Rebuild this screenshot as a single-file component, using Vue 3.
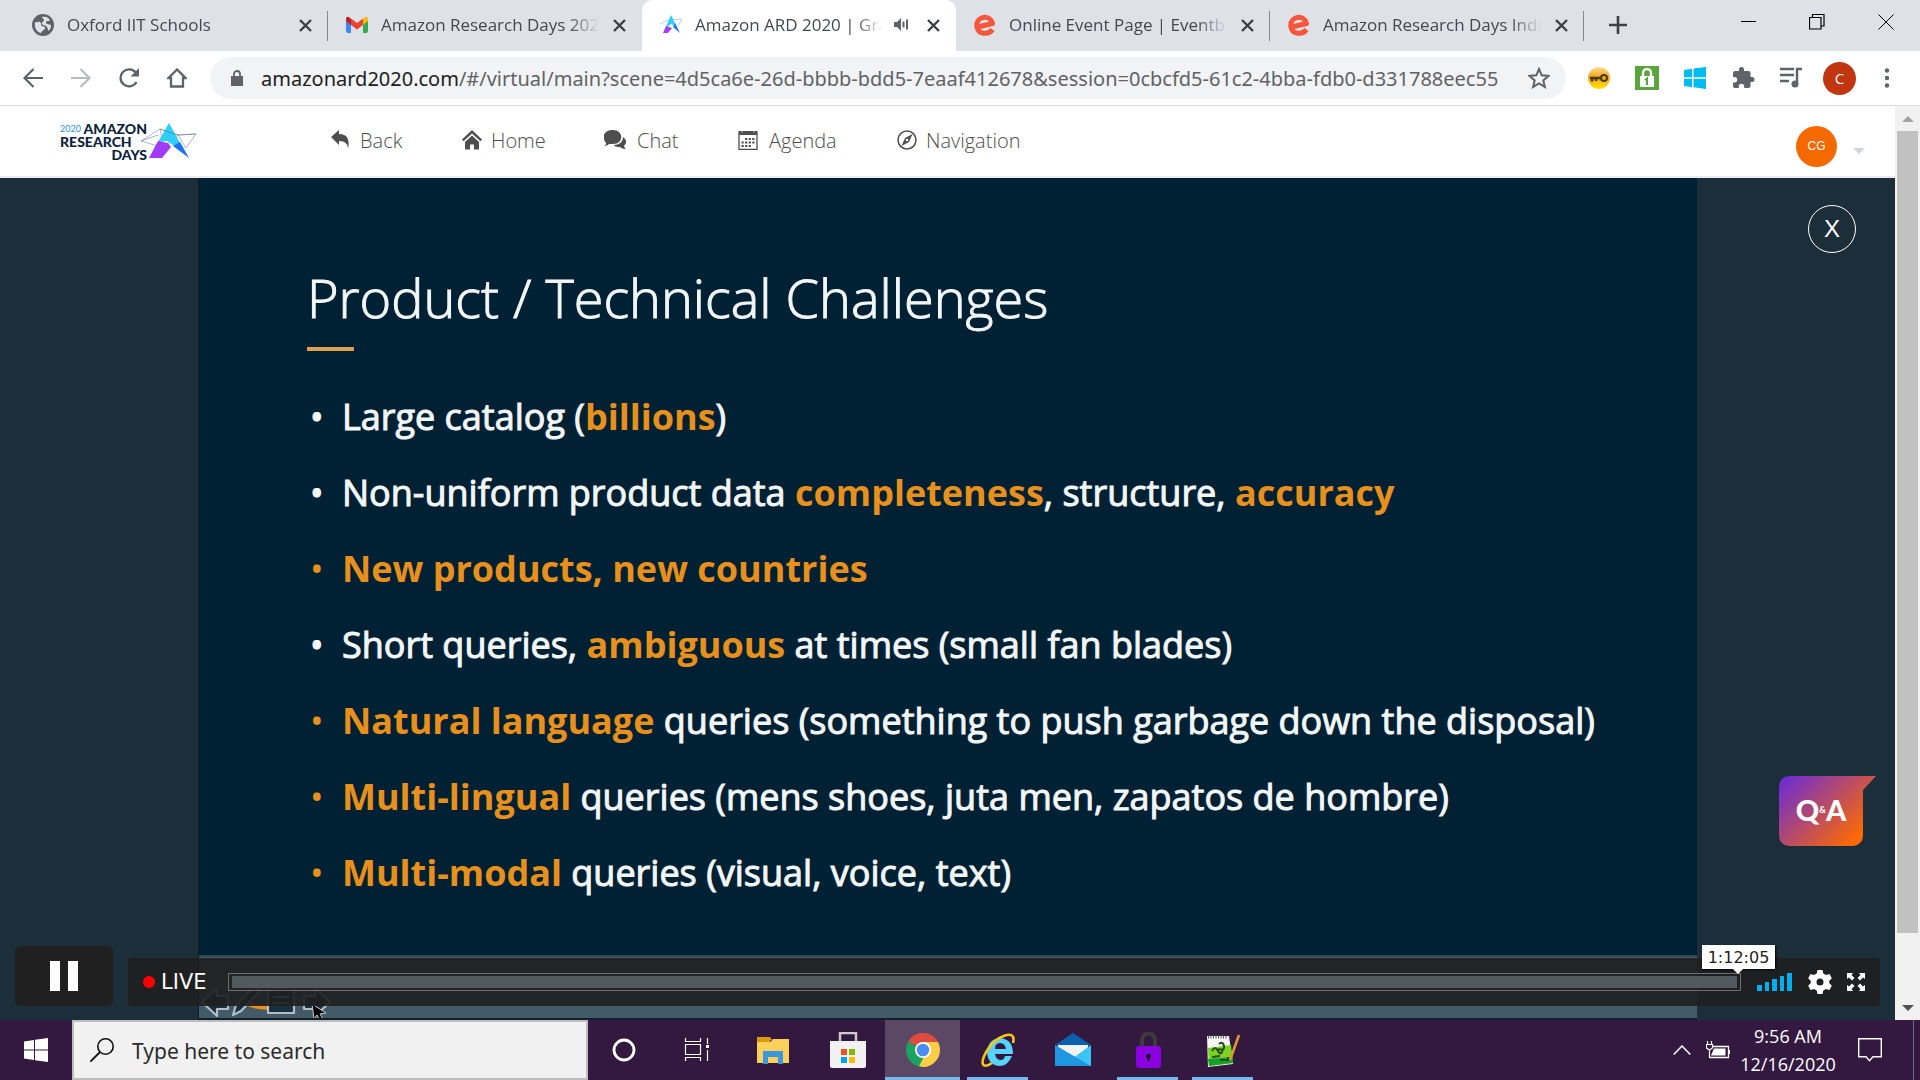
<script setup>
const tabs = [
  { title: 'Oxford IIT Schools', icon: 'globe', sep: true },
  { title: 'Amazon Research Days 2020', icon: 'gmail' },
  { title: 'Amazon ARD 2020 | Grand', icon: 'ard', active: true, audio: true },
  { title: 'Online Event Page | Eventbrite', icon: 'eb', sep: true },
  { title: 'Amazon Research Days India', icon: 'eb', sep: true },
]
const bullets = [
  { parts: [['Large catalog (', 0], ['billions', 1], [')', 0]] },
  { parts: [['Non-uniform product data ', 0], ['completeness', 1], [', structure, ', 0], ['accuracy', 1]] },
  { hot: true, parts: [['New products, new countries', 1]] },
  { parts: [['Short queries, ', 0], ['ambiguous', 1], [' at times (small fan blades)', 0]] },
  { hot: true, parts: [['Natural language', 1], [' queries (something to push garbage down the disposal)', 0]] },
  { hot: true, parts: [['Multi-lingual', 1], [' queries (mens shoes, juta men, zapatos de hombre)', 0]] },
  { hot: true, parts: [['Multi-modal', 1], [' queries (visual, voice, text)', 0]] },
]
</script>

<template>
  <div class="screen">
    <header class="tabstrip">
      <div v-for="(t, i) in tabs" :key="i" class="tab" :class="{ active: t.active, sep: t.sep }">
        <svg v-if="t.icon === 'globe'" class="fav" viewBox="0 0 22 22"><circle cx="11" cy="11" r="11" fill="#5f6368" /><path d="M3 8c2 1 3-1 5 0s0 3 2 4 3 0 3 2-3 2-4 5C5 18 2 14 3 8zM10 3c3-1 6 0 8 3-1 2-3 0-4 2s3 2 5 3c0 3-1 5-3 6 0-3-1-4-2-5s-3 0-4-2 2-2 2-4-2-1-2-3z" fill="#dee1e6" /></svg>
        <svg v-else-if="t.icon === 'gmail'" class="fav" viewBox="0 0 22 22"><path d="M0 5v12q0 2 2 2h3V9z" fill="#4285f4" /><path d="M22 5v12q0 2-2 2h-3V9z" fill="#34a853" /><path d="M17 5v6l5-4V5q0-3-3-2z" fill="#fbbc04" /><path d="M5 5v6L0 7V5q0-3 3-2z" fill="#c5221f" /><path d="M5 4.500l6 4.500 6-4.500V11l-6 4.500L5 11z" fill="#ea4335" /></svg>
        <svg v-else-if="t.icon === 'ard'" class="fav" viewBox="0 0 22 22"><path d="M0 10l8-4 14-1-4 7" fill="none" stroke="#c8ccd8" /><path d="M11 1l6 12-6-3-6 5z" fill="#2dd0fa" /><path d="M6 12l6 2-4 5H3z" fill="#a63dfb" /><path d="M15 9l5 10-7-6z" fill="#1d78ff" /></svg>
        <svg v-else class="fav" viewBox="0 0 22 22"><path d="M3.500 13L18.500 9.500C16 0 2 2 2.800 12c1 9 12 9 15.700 3.500" fill="none" stroke="#f6563b" stroke-width="5" stroke-linejoin="round" /></svg>
        <span class="tab-title">{{ t.title }}</span>
        <svg v-if="t.audio" class="audio" viewBox="0 0 15 13"><path d="M0 4h3l4-4v13L3 9H0z" fill="#5f6368" /><path d="M9.500 3.500v6M13 1.500v10" stroke="#5f6368" stroke-width="2" /></svg>
        <button class="tab-x" aria-label="Close tab"><svg viewBox="0 0 13 13"><path d="M1 1l11 11M12 1L1 12" stroke="#3c4043" stroke-width="2.400" /></svg></button>
      </div>
      <button class="newtab" aria-label="New tab"><svg viewBox="0 0 18 18"><path d="M9 0v18M0 9h18" stroke="#3c4043" stroke-width="2.600" /></svg></button>
      <div class="wincontrols">
        <button aria-label="Minimize"><svg viewBox="0 0 16 16"><path d="M1 7.500h15" stroke="#000" /></svg></button>
        <button aria-label="Restore"><svg viewBox="0 0 16 16"><path d="M.5 3.500h11.500v11.500H.5zM3.500 3V.5H15V12h-3" fill="none" stroke="#000" stroke-width="1.200" /></svg></button>
        <button aria-label="Close"><svg viewBox="0 0 16 16"><path d="M.5.5l15 15M15.500.5l-15 15" stroke="#000" /></svg></button>
      </div>
    </header>

    <div class="toolbar">
      <div class="navbtns">
        <button aria-label="Back"><svg viewBox="0 0 20 20"><path d="M20 10H2M10.500 1L1.500 10l9 9" fill="none" stroke="#5f6368" stroke-width="2.200" /></svg></button>
        <button aria-label="Forward"><svg viewBox="0 0 20 20"><path d="M0 10h18M9.500 1l9 9-9 9" fill="none" stroke="#b9bbbe" stroke-width="2.200" /></svg></button>
        <button aria-label="Reload"><svg viewBox="0 0 20 20"><path d="M17.500 14a8.500 8.500 0 1 1-.8-9.500" fill="none" stroke="#5f6368" stroke-width="2.300" /><path d="M20 0v8.500h-8.500z" fill="#5f6368" /></svg></button>
        <button aria-label="Home page"><svg viewBox="0 0 20 20"><path d="M1.500 10L10 1.500l8.500 8.500H16v8.500H4V10z" fill="none" stroke="#5f6368" stroke-width="2.300" /></svg></button>
      </div>
      <div class="omnibox">
        <svg class="lock" viewBox="0 0 12 16"><path d="M0 6h12v10H0z" fill="#5f6368" /><path d="M3 7V4a3 3 0 0 1 6 0v3" fill="none" stroke="#5f6368" stroke-width="1.800" /></svg>
        <span class="url"><b>amazonard2020.com</b>/#/virtual/main?scene=4d5ca6e-26d-bbbb-bdd5-7eaaf412678&amp;session=0cbcfd5-61c2-4bba-fdb0-d331788eec55</span>
        <svg class="star" viewBox="0 0 22 22"><path d="M11 2l2.700 6.300 6.800.6-5.200 4.500 1.600 6.600L11 16.500 5.100 20l1.600-6.600L1.500 8.900l6.800-.6z" fill="none" stroke="#5f6368" stroke-width="2" /></svg>
      </div>
      <div class="exts">
        <svg viewBox="0 0 24 24"><defs><linearGradient id="key" x2="0" y2="1"><stop stop-color="#fbdc9a" /><stop offset=".45" stop-color="#f5a614" /><stop offset="1" stop-color="#ffe400" /></linearGradient></defs><circle cx="12" cy="12" r="11" fill="url(#key)" /><path d="M3 12h11M5 12v3.500M9 12v3" stroke="#4a3a20" stroke-width="2.600" /><circle cx="17" cy="12" r="3" fill="none" stroke="#4a3a20" stroke-width="2" /></svg>
        <svg viewBox="0 0 24 24"><path d="M0 0h24v24H0z" fill="#5ba53e" /><path d="M5 10h14v11H5z" fill="#fff" /><path d="M8 11V7a4 4 0 0 1 8 0v3" fill="none" stroke="#fff" stroke-width="2.400" /><path d="M10 14l2-1.500V19" fill="none" stroke="#5ba53e" stroke-width="2" /></svg>
        <svg viewBox="0 0 24 24"><path d="M1 4l8-1.200v8.500H1zM10.500 2.600L23 1v10.300H10.500zM1 12.800h8v8.400L1 20zM10.500 12.800H23V23l-12.500-1.700z" fill="#00bcf2" /></svg>
        <svg viewBox="0 0 24 24"><path d="M21 11h-1.500V7q0-2-2-2H13V3.500a2.500 2.500 0 0 0-5 0V5H4Q2 5 2 7v4h1.500a2.700 2.700 0 0 1 0 5.400H2V20q0 2 2 2h3.800v-1.500a2.700 2.700 0 0 1 5.400 0V22h4.300q2 0 2-2v-4H21a2.500 2.500 0 0 0 0-5z" fill="#5f6368" /></svg>
        <svg viewBox="0 0 24 24"><path d="M1 3h14M1 9h14M1 15h9M18 18V3h5" fill="none" stroke="#5f6368" stroke-width="2.400" /><circle cx="16" cy="18" r="3.500" fill="#5f6368" /></svg>
        <button class="profile" aria-label="Profile">C</button>
        <button class="dots" aria-label="Menu"><svg viewBox="0 0 6 20"><circle cx="3" cy="2.500" r="2.200" /><circle cx="3" cy="10" r="2.200" /><circle cx="3" cy="17.500" r="2.200" /></svg></button>
      </div>
    </div>

    <div class="page">
      <main class="site">
        <nav class="sitebar">
          <a class="logo" href="#" aria-label="2020 Amazon Research Days">
            <span class="logo-text"><span><i>2020</i>AMAZON</span><span>RESEARCH</span><span>DAYS</span></span>
            <svg viewBox="0 0 58 36"><path d="M1 18L20 6l18 6 18-1L46 25 38 12 24 25 1 18M20 6l4 19" fill="none" stroke="#9aa3b5" stroke-width=".8" /><path d="M29 0l11 20-4 4-9-6-9 1z" fill="#2fcefb" /><path d="M18 18l10 2 3 4-9 11H9z" fill="#a03cf8" /><path d="M40 19l9 16-16-12z" fill="#1a73f8" /><path d="M1 18l17-6M20 6l18 6 18-1" fill="none" stroke="#55607a" stroke-width=".5" /></svg>
          </a>
          <a class="item back" href="#"><svg viewBox="0 0 20 20"><path d="M0 7l8-7v4c8 0 11 5 9 15 0-5-3-8-9-8v4z" /></svg>Back</a>
          <a class="item home" href="#"><svg viewBox="0 0 20 20"><path d="M0 9.500L10 0l10 9.500-1.500 1.800L10 3.500 1.500 11.300z" /><path d="M3 12l7-6.500 7 6.500v7.500h-5v-5H8v5H3z" /></svg>Home</a>
          <a class="item chat" href="#"><svg viewBox="0 0 22 20"><path d="M9 0c11 0 11 14 0 14-2 0-3 0-4 0-1 1-3 2-5 2 2-1 2-2 2-3C-3 7 0 0 9 0z" /><path d="M19 7c4 3 4 6 1 9 0 1 1 2 2 3-3 0-5-1-6-2-3 0-5 0-6-2 5 0 9-3 9-8z" /></svg>Chat</a>
          <a class="item agenda" href="#"><svg viewBox="0 0 20 20"><path d="M1 2h18v17.500H1z" fill="none" stroke="#4e4e4e" stroke-width="1.300" /><path d="M1 1h2v2h2V1h10v2h2V1h2v4H1z" /><path d="M7 9h10M3.500 12.500h13M3.500 16h9.500" stroke="#4e4e4e" stroke-width="1.900" stroke-dasharray="2.200 1.400" /></svg>Agenda</a>
          <a class="item nav" href="#"><svg viewBox="0 0 20 20"><circle cx="10" cy="10" r="9" fill="none" stroke="#4e4e4e" stroke-width="1.500" /><path d="M15.500 4l-3.500 8-7.500 4L8 8z" /><circle cx="10" cy="10" r="1.300" fill="#fff" /></svg>Navigation</a>
          <button class="user">CG</button>
          <svg class="caret" viewBox="0 0 12 6"><path d="M0 0h12L6 6z" fill="#cfd6e4" /></svg>
        </nav>

        <section class="stage">
          <article class="slide">
            <h1>Product / Technical Challenges</h1>
            <div class="rule"></div>
            <ul>
              <li v-for="(b, i) in bullets" :key="i" :class="{ hot: b.hot }"><template v-for="(p, j) in b.parts" :key="j"><strong v-if="p[1]">{{ p[0] }}</strong><template v-else>{{ p[0] }}</template></template></li>
            </ul>
            <footer class="slide-foot">
              <svg viewBox="0 0 160 61" fill="#17303f" stroke="#b4bfc5" stroke-width="2.200" stroke-linejoin="round">
                <path d="M42 43q22 14 54 1" fill="none" stroke="#e8901c" stroke-width="5" />
                <path d="M3 45l15-14v8h11v13H18v7zM34 58l3-10 18-18 6 4-19 20zM69 31h26v25H69zM131 45l-15-14v8h-11v13h11v7z" />
                <path d="M74 40h16M74 46h16" />
                <path d="M113 47l14 9-6 1 4 7h-4l-3-6-3 4z" fill="#000" stroke="#ccc" stroke-width="1" />
              </svg>
            </footer>
          </article>
          <button class="close" aria-label="Close">X</button>
          <button class="qa"><span>Q<small>&amp;</small>A</span></button>
          <div class="player">
            <button class="pause" aria-label="Pause"><i></i><i></i></button>
            <div class="controls">
              <span class="live">LIVE</span>
              <div class="track"><div class="fill"></div><output class="tip">1:12:05</output></div>
              <svg class="vol" viewBox="0 0 35 18" fill="#00adef"><path d="M0 12h5v6H0zM8 9h4v9H8zM15 6h5v12h-5zM23 3h4v15h-4zM30 0h5v18h-5z" /></svg>
              <svg class="gear" viewBox="0 0 24 24"><path fill="#fff" fill-rule="evenodd" d="M9.500 0h5l.8 3.500 2.700 1.500 3.500-1 2.300 4.300L21.200 11v2l2.600 2.700-2.300 4.300-3.500-1-2.700 1.500-.8 3.500h-5l-.8-3.500L6 19l-3.500 1L.2 15.700 2.800 13v-2L.2 8.300 2.500 4 6 5l2.700-1.500zM12 8.500a3.500 3.500 0 1 0 0 7 3.500 3.500 0 0 0 0-7z" /></svg>
              <svg class="full" viewBox="0 0 18 18" fill="#fff"><path d="M0 0h6L4.500 2l3 3L5 7.500l-3-3L0 6zM18 0v6l-2-1.500-3 3L10.500 5l3-3L12 0zM0 18v-6l2 1.500 3-3L7.500 13l-3 3L6 18zM18 18h-6l1.500-2-3-3 2.500-2.500 3 3 2-1.500z" /></svg>
            </div>
          </div>
        </section>
      </main>
      <div class="scrollbar">
        <svg viewBox="0 0 12 6"><path d="M6 0l6 6H0z" fill="#a3a3a3" /></svg>
        <div class="thumb"></div>
        <svg viewBox="0 0 12 6"><path d="M0 0h12L6 6z" fill="#505050" /></svg>
      </div>
    </div>

    <footer class="taskbar">
      <button class="start" aria-label="Start"><svg viewBox="0 0 24 24" fill="#fff"><path d="M0 3.400L10 2v9.500H0zM11 1.800L24 0v11.500H11zM0 12.500h10V22L0 20.600zM11 12.500h13V24l-13-1.800z" /></svg></button>
      <label class="search">
        <svg viewBox="0 0 24 24"><circle cx="15.500" cy="8.500" r="7.700" fill="none" stroke="#111" stroke-width="1.600" /><path d="M10 14L0 24" stroke="#111" stroke-width="1.800" /></svg>
        <input type="text" placeholder="Type here to search" aria-label="Type here to search" />
      </label>
      <div class="apps">
        <button class="cortana" aria-label="Cortana"><svg viewBox="0 0 36 36"><circle cx="18" cy="18" r="10" fill="none" stroke="#fff" stroke-width="2.800" /></svg></button>
        <button aria-label="Task View"><svg viewBox="1 0 36 36"><path d="M6.500 6v3.500h15V6M6.500 29v-3.500h15V29M6.500 12.500h15v10h-15zM28.500 6v6M28.500 18v11" fill="none" stroke="#fff" stroke-width="1.200" /><path d="M27 13h3v3h-3z" fill="#fff" /></svg></button>
        <button aria-label="File Explorer"><svg viewBox="0 0 36 36"><path d="M2 5h13l2 3h-2v4H2z" fill="#dc9a08" /><path d="M2 10h13l3-3h16v24H2z" fill="#fdd05c" /><path d="M8 19h20v13h-5v-7h-10v7H8z" fill="#3a96dd" /></svg></button>
        <button aria-label="Store"><svg viewBox="0 0 36 36"><path d="M10 12V1h16v11" fill="none" stroke="#ccc" stroke-width="2.500" /><path d="M0 9h36v25q0 2-2 2H2q-2 0-2-2z" fill="#f1f1f1" /><path d="M11 17h6v6h-6z" fill="#f25022" /><path d="M19 17h6v6h-6z" fill="#7fba00" /><path d="M11 25h6v6h-6z" fill="#00a4ef" /><path d="M19 25h6v6h-6z" fill="#ffb900" /></svg></button>
        <button class="open current" aria-label="Chrome"><svg viewBox="0 0 36 36"><path d="M18 18L3.300 9.500A17 17 0 0 1 32.700 9.500z" fill="#dd4b3e" /><path d="M18 18l14.700-8.500A17 17 0 0 1 18 35z" fill="#fdcd45" /><path d="M18 18v17A17 17 0 0 1 3.300 9.500z" fill="#1ca261" /><path d="M18 10h15l-2 5-7 8-6 12-4-1 6-11z" fill="#fdcd45" /><path d="M3.300 9.500A17 17 0 0 1 33 10H18z" fill="#dd4b3e" /><circle cx="18" cy="18" r="8" fill="#fff" /><circle cx="18" cy="18" r="6.300" fill="#4d8bf5" /></svg></button>
        <button class="open" aria-label="Internet Explorer"><svg viewBox="0 0 36 36"><path d="M32 24q-4 10-13 10-11-1-12-14 1-13 13-14 13 1 13 16H15q1 6 6 6 3 0 4-4zM15 17h11q-1-6-6-6t-5 6z" fill="#57d2fa" fill-rule="evenodd" /><path d="M33 11c4-16-17-6-25 6C-1 31 2 38 12 31" fill="none" stroke="#f5c518" stroke-width="2.600" /></svg></button>
        <button aria-label="Mail"><svg viewBox="0 0 36 36"><path d="M0 13L18 1l18 12-18 6z" fill="#0b60ae" /><path d="M3 13h30v14H3z" fill="#f2f2f2" /><path d="M0 13l18 13 18-13v21H0z" fill="#3cc5f4" /><path d="M0 13l36 21H0z" fill="#1e96e0" /></svg></button>
        <button class="open" aria-label="Vault"><svg viewBox="0 0 36 36"><path d="M12 17V8a6.500 6.500 0 0 1 13 0v9" fill="none" stroke="#3c3c3c" stroke-width="4" /><rect x="6" y="14" width="25" height="22" rx="3" fill="#8a00e0" /><circle cx="18.500" cy="24" r="2.200" /><path d="M17.500 24h2v5h-2z" /></svg></button>
        <button class="open" aria-label="Notepad++"><svg viewBox="0 0 36 36"><path d="M2 4h22l4 28-25 3z" fill="#f5f5f5" /><path d="M3 16l23-3 2 18-24 3z" fill="#7dd321" /><path d="M3 27l25-2v6L4 34z" fill="#18a02c" /><path d="M3 5h19" stroke="#555" stroke-width="3" stroke-dasharray="1 1.500" /><path d="M7 19q3-6 6 0t5-2M14 12q4-3 5 2t-6 3M15 28h8v-3M7 25l8-1" fill="none" stroke="#254d20" stroke-width="2" /><path d="M34 3l-9 25" stroke="#d99a2b" stroke-width="2.600" /></svg></button>
      </div>
      <div class="tray">
        <svg class="chev" viewBox="0 0 18 10"><path d="M.7 9.500L9 1l8.300 8.500" fill="none" stroke="#fff" stroke-width="1.500" /></svg>
        <svg class="batt" viewBox="0 0 24 20"><path d="M3 6.500h19.500v11H4M23.500 10v4" fill="none" stroke="#fff" stroke-width="1.300" /><path d="M8 8.500h11.500v7H5z" fill="#fff" /><path d="M1.500 1v3M5.500 1v3M.5 4.500h6v3.500l-3 2-3-2zM3.500 10v8" fill="#33193f" stroke="#fff" stroke-width="1.200" /></svg>
        <div class="clock"><time>9:56 AM</time><time>12/16/2020</time></div>
        <svg class="note" viewBox="0 0 24 24"><path d="M.7.7h22.600v18H15l-3.500 4-3.500-4H.7z" fill="none" stroke="#fff" stroke-width="1.400" /></svg>
      </div>
    </footer>
  </div>
</template>

<style>
body { margin: 0; }
</style>

<style scoped>
* { box-sizing: border-box; }
.screen { display: flex; flex-direction: column; min-height: 100vh; font-family: "Open Sans", "Noto Sans", sans-serif; background: #fff; overflow: hidden; }
button { border: 0; padding: 0; background: none; font-family: inherit; display: flex; align-items: center; justify-content: center; flex: none; }
svg { display: block; flex: none; }
a { text-decoration: none; }

.tabstrip { height: 51px; background: #dee1e6; display: flex; align-items: stretch; padding-left: 14px; }
.tab { flex: 0 1 314px; min-width: 0; display: flex; align-items: center; padding: 0 16px 0 18px; position: relative; }
.tab.sep::after { content: ""; position: absolute; right: 0; top: 11px; width: 1px; height: 30px; background: #85888c; }
.tab.active { background: #fff; border-radius: 10px 10px 0 0; }
.fav { width: 22px; height: 22px; margin: 0 13px 2px 0; }
.tab-title { flex: 1; min-width: 0; font-size: 17px; color: #45494d; white-space: nowrap; overflow: hidden; margin-bottom: 2px; -webkit-mask-image: linear-gradient(90deg, #000 86%, transparent); mask-image: linear-gradient(90deg, #000 86%, transparent); }
.audio { width: 15px; height: 13px; margin: 0 4px 2px 12px; }
.tab-x { width: 13px; margin-left: 14px; }
.tab-x svg { width: 13px; height: 13px; }
.newtab { width: 18px; margin-left: 25px; margin-bottom: 2px; }
.newtab svg { width: 18px; height: 18px; }
.wincontrols { margin-left: auto; display: flex; gap: 53px; padding-right: 26px; height: 43px; }
.wincontrols svg { width: 16px; height: 16px; }

.toolbar { height: 55px; display: flex; align-items: center; border-bottom: 1px solid #dadce0; padding: 0 30px 0 23px; }
.navbtns { display: flex; gap: 28px; margin-right: 23px; }
.navbtns svg { width: 20px; height: 20px; }
.omnibox { flex: 1; min-width: 0; height: 42px; border-radius: 21px; background: #f1f3f4; display: flex; align-items: center; padding: 0 16px 0 21px; }
.lock { width: 12px; height: 16px; margin-right: 18px; }
.url { flex: 1; min-width: 0; white-space: nowrap; overflow: hidden; font-family: "Noto Sans", sans-serif; font-size: 20px; color: #5f6368; }
.url b { font-weight: 400; color: #202124; }
.star { width: 22px; height: 22px; }
.exts { display: flex; align-items: center; gap: 24px; padding-left: 21px; }
.exts > svg { width: 24px; height: 24px; }
.profile { width: 33px; height: 33px; border-radius: 50%; background: #c1350f; color: #fff; font-size: 15px; margin-left: -4px; }
.dots { width: 6px; margin-left: 4px; }
.dots svg { width: 6px; height: 20px; fill: #5f6368; }

.page { flex: 1; display: flex; min-height: 0; }
.site { flex: 1; min-width: 0; display: flex; flex-direction: column; }
.sitebar { height: 72px; display: flex; align-items: center; padding: 0 30px 0 60px; border-bottom: 2px solid #ececec; }
.logo { display: flex; align-items: center; width: 271px; color: #0d2240; font: 900 14px/13px Lato, sans-serif; }
.logo-text { display: flex; flex-direction: column; width: 87px; white-space: nowrap; }
.logo-text span:first-child { display: flex; justify-content: space-between; }
.logo-text span:last-child { align-self: flex-end; }
.logo-text i { font: 400 9px/13px Lato, sans-serif; color: #2f8fe0; }
.logo svg { width: 58px; height: 36px; margin-left: -7px; }
.item { display: flex; align-items: center; gap: 9px; color: #4e4e4e; fill: #4e4e4e; font-size: 20px; font-weight: 300; margin-bottom: 2px; }
.item svg { width: 20px; height: 20px; }
.item.chat svg { width: 22px; }
.item.chat, .item.agenda { gap: 11px; }
.back { width: 131px; }
.home { width: 142px; }
.chat { width: 134px; }
.agenda { width: 159px; }
.user { width: 41px; height: 41px; border-radius: 50%; background: #f56a00; color: #fff; font: 12px "Liberation Sans", sans-serif; margin-left: auto; margin-top: 10px; }
.caret { width: 12px; height: 6px; margin: 20px 0 0 16px; }

.stage { flex: 1; position: relative; background: #1d2e3b; display: flex; justify-content: center; padding: 0 198px; }
.slide { flex: 1; min-width: 0; background: #002133; color: #f2f6f7; display: flex; flex-direction: column; padding: 81px 0 0 108px; border-left: 1px solid #0c1d28; }
h1 { margin: 0; font-size: 54px; line-height: 76px; font-weight: 300; white-space: nowrap; -webkit-text-stroke: 1px #f2f6f7; }
.rule { width: 47px; height: 4px; background: #dda04f; margin: 12px 0 28px; }
ul { list-style: none; margin: 0; padding: 0; font-size: 36px; line-height: 76px; white-space: nowrap; -webkit-text-stroke: 1px #f2f6f7; }
li { display: flex; white-space: pre; align-items: baseline; }
li::before { content: "•"; width: 32px; padding-left: 3px; }
li.hot::before, strong { color: #e8901c; -webkit-text-stroke: 0; }
strong { font-weight: 700; }
.slide-foot { margin: auto 0 0 -108px; height: 65px; background: #435a69; border-top: 2px solid #2b4553; border-bottom: 2px solid #11202a; }
.slide-foot svg { width: 160px; height: 61px; }
.close { position: absolute; right: 39px; top: 27px; width: 48px; height: 48px; border: 1px solid #fff; border-radius: 50%; color: #fff; font: 24px/24px "Liberation Sans", sans-serif; }
.qa { position: absolute; right: 19px; bottom: 174px; width: 97px; height: 70px; background: linear-gradient(135deg, #6f2dd0 5%, #ff6a00 85%); clip-path: path("M10 0H97L84 14V60A10 10 0 0 1 74 70H10A10 10 0 0 1 0 60V10A10 10 0 0 1 10 0Z"); color: #fff; font: 900 29px/30px Lato, sans-serif; padding: 0 13px 2px 0; }
.qa span { display: flex; align-items: center; }
.qa small { font-size: 9px; }
.player { position: absolute; left: 15px; right: 15px; bottom: 14px; display: flex; align-items: flex-end; gap: 15px; }
.pause { width: 98px; height: 60px; border-radius: 6px; background: #202020; gap: 8px; }
.pause i { width: 10px; height: 30px; background: #fff; }
.controls { flex: 1; height: 48px; border-radius: 3px; background: rgba(32, 32, 32, .92); display: flex; align-items: center; padding: 0 15px; }
.live { color: #fff; font: 21px/24px "DejaVu Sans", sans-serif; display: flex; align-items: center; gap: 6px; width: 85px; }
.live::before { content: ""; width: 12px; height: 12px; border-radius: 50%; background: #f00; }
.track { flex: 1; height: 18px; border: 1px solid #6e6e6e; padding: 2px 3px; position: relative; margin-right: 16px; }
.fill { height: 12px; background: #50595e; }
.tip { position: absolute; right: -35px; top: -29px; width: 73px; height: 24px; background: #fff; color: #222; font: 16px/25px "DejaVu Sans", sans-serif; text-align: center; box-shadow: 1px 1px 2px #000; }
.tip::after { content: ""; position: absolute; left: 31px; top: 24px; border: 5px solid transparent; border-top-color: #fff; border-bottom: 0; }
.vol { width: 35px; height: 18px; }
.gear { width: 24px; height: 24px; margin: 0 15px 0 16px; }
.full { width: 18px; height: 18px; }
.scrollbar { width: 25px; background: #f1f1f1; display: flex; flex-direction: column; align-items: center; padding: 10px 2px 9px; }
.scrollbar svg { width: 12px; height: 6px; }
.thumb { width: 21px; flex: 1; background: #c1c1c1; margin: 9px 0 72px; }

.taskbar { height: 60px; background: #33193f; display: flex; align-items: stretch; color: #fff; }
.start { width: 72px; }
.start svg { width: 24px; height: 24px; }
.search { width: 516px; background: #f1f1f1; border: 2px solid #bdbdbd; display: flex; align-items: center; padding-left: 16px; gap: 18px; }
.search svg { width: 24px; height: 24px; }
.search input { border: 0; outline: 0; background: none; flex: 1; min-width: 0; font: 21px "Noto Sans", sans-serif; padding: 2px 0 0; }
.search input::placeholder { color: #2b2b2b; opacity: 1; }
.apps { display: flex; }
.apps button { width: 75px; position: relative; }
.apps .cortana { width: 72px; }
.apps svg { width: 36px; height: 36px; }
.apps .open::after { content: ""; position: absolute; left: 7px; right: 7px; bottom: 0; height: 3px; background: #76b9ed; }
.apps .current { background: #5b4766; }
.apps .current::after { left: 0; right: 0; }
.tray { margin-left: auto; display: flex; align-items: center; padding-right: 31px; margin-right: 6px; border-right: 1px solid #75657e; }
.chev { width: 18px; height: 10px; margin-right: 15px; }
.batt { width: 24px; height: 20px; }
.clock { width: 116px; margin-right: 12px; text-align: center; font-size: 18px; line-height: 28px; display: flex; flex-direction: column; }
.note { width: 24px; height: 24px; }
</style>
